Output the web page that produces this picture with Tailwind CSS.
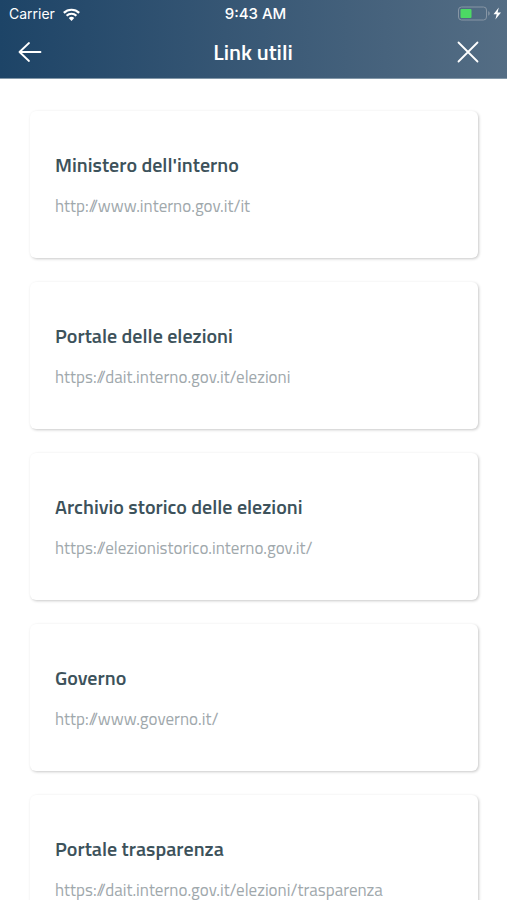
<!DOCTYPE html>
<html lang="it">
<head>
<meta charset="utf-8">
<meta name="viewport" content="width=device-width, initial-scale=1">
<title>Link utili</title>
<script src="https://cdn.jsdelivr.net/npm/@tailwindcss/browser@4"></script>
</head>
<body class="flex h-screen flex-col overflow-hidden bg-white font-['Titillium_Web',Roboto,sans-serif]">
<header class="shrink-0 border-b border-[#8297a8] bg-linear-to-r from-[#1d4467] to-[#546d84] text-white">
  <div class="grid h-7 grid-cols-3 items-center px-[5px] font-[Inter,sans-serif] text-sm">
    <div class="flex items-center gap-2 pl-1">
      <span>Carrier</span>
      <svg class="h-[13px] w-[17px]" viewBox="0 0 16 12" fill="none" stroke="#fff" stroke-width="2.1" aria-label="Wi-Fi"><path d="M.8 4.5a10.200 10.200 0 0 1 14.400 0"/><path d="M3.400 7.200a6.500 6.500 0 0 1 9.200 0"/><path d="M8 12 5.400 9.300a3.700 3.700 0 0 1 5.200 0z" fill="#fff" stroke="none"/></svg>
    </div>
    <time class="pl-1 text-center text-[15px] font-medium">9:43 AM</time>
    <div class="flex justify-end">
      <svg class="h-4 w-11" viewBox="0 0 44 16" aria-label="Batteria in carica"><rect x=".5" y="1" width="28" height="13" rx="3" fill="none" stroke="#8796a5"/><rect x="2.500" y="3" width="11" height="9" rx="1" fill="#4cd964"/><path d="M30.200 5.300c2 .6 2 3.800 0 4.400z" fill="#8796a5"/><path d="M40.800 1.500 35.500 8.300h3.200L37.400 13.500l5.600-7h-3.400z" fill="#fff"/></svg>
    </div>
  </div>
  <div class="grid h-[50px] grid-cols-[32px_1fr_32px] items-center pr-[23px] pb-0.5 pl-[14px]">
    <button type="button" aria-label="Indietro" class="flex size-8 items-center justify-center"><svg class="size-6" viewBox="0 0 24 24" fill="none" stroke="#fff" stroke-width="1.800" stroke-linecap="round" stroke-linejoin="round"><path d="M11 3 1.500 12l9.500 9M1.500 12h21"/></svg></button>
    <h1 class="pl-2 text-center text-[22px] leading-7 font-semibold">Link utili</h1>
    <button type="button" aria-label="Chiudi" class="flex size-8 items-center justify-center justify-self-end"><svg class="size-6" viewBox="0 0 24 24" fill="none" stroke="#fff" stroke-width="1.800" stroke-linecap="round"><path d="m2.500 2.500 19 19m0-19-19 19"/></svg></button>
  </div>
</header>
<main class="min-h-0 flex-1 overflow-y-auto py-8 pr-[29px] pl-[30px] [scrollbar-width:none]">
  <ul class="flex flex-col gap-6">
    <li><a href="http://www.interno.gov.it/it" class="block rounded-md bg-white px-[25px] pt-[39px] pb-[37px] shadow-[1px_1px_3px_#00000038]"><h2 class="text-[20px] leading-[30px] font-semibold text-[#3d525b]">Ministero dell'interno</h2><p class="mt-3 text-[17px] leading-[29px] font-normal text-[#a0a8ac]">http://www.interno.gov.it/it</p></a></li>
    <li><a href="https://dait.interno.gov.it/elezioni" class="block rounded-md bg-white px-[25px] pt-[39px] pb-[37px] shadow-[1px_1px_3px_#00000038]"><h2 class="text-[20px] leading-[30px] font-semibold text-[#3d525b]">Portale delle elezioni</h2><p class="mt-3 text-[17px] leading-[29px] font-normal text-[#a0a8ac]">https://dait.interno.gov.it/elezioni</p></a></li>
    <li><a href="https://elezionistorico.interno.gov.it/" class="block rounded-md bg-white px-[25px] pt-[39px] pb-[37px] shadow-[1px_1px_3px_#00000038]"><h2 class="text-[20px] leading-[30px] font-semibold text-[#3d525b]">Archivio storico delle elezioni</h2><p class="mt-3 text-[17px] leading-[29px] font-normal text-[#a0a8ac]">https://elezionistorico.interno.gov.it/</p></a></li>
    <li><a href="http://www.governo.it/" class="block rounded-md bg-white px-[25px] pt-[39px] pb-[37px] shadow-[1px_1px_3px_#00000038]"><h2 class="text-[20px] leading-[30px] font-semibold text-[#3d525b]">Governo</h2><p class="mt-3 text-[17px] leading-[29px] font-normal text-[#a0a8ac]">http://www.governo.it/</p></a></li>
    <li><a href="https://dait.interno.gov.it/elezioni/trasparenza" class="block rounded-md bg-white px-[25px] pt-[39px] pb-[37px] shadow-[1px_1px_3px_#00000038]"><h2 class="text-[20px] leading-[30px] font-semibold text-[#3d525b]">Portale trasparenza</h2><p class="mt-3 text-[17px] leading-[29px] font-normal text-[#a0a8ac]">https://dait.interno.gov.it/elezioni/trasparenza</p></a></li>
  </ul>
</main>
</body>
</html>
